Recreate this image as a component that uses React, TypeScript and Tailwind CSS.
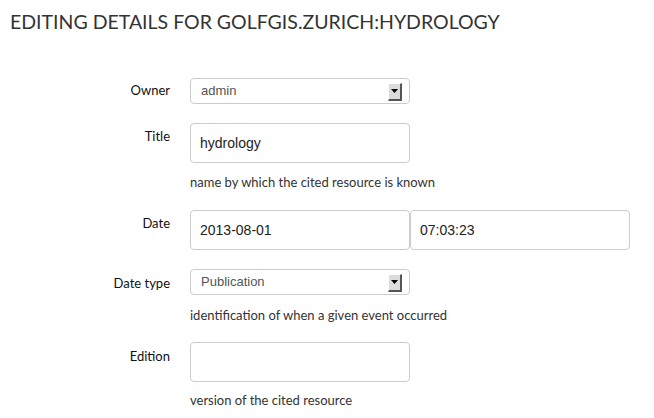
import React from "react";

const lato = { fontFamily: "Lato, 'Open Sans', sans-serif" };

function Arrow() {
  return (
    <div className="absolute right-[7px] top-[4px] w-[14px] h-[18px] bg-[#dcdcdc] border-r-2 border-b-2 border-r-[#555] border-b-[#555] border-t border-l border-t-white border-l-white flex items-center justify-center">
      <svg width="7" height="5" viewBox="0 0 7 5">
        <polygon points="0,0 7,0 3.5,4" fill="#000" />
      </svg>
    </div>
  );
}

function Select({ value }: { value: string }) {
  return (
    <div className="relative w-[220px] h-[26px] border border-[#ccc] rounded-[4px] bg-white flex items-center pl-[10px] text-[13px] text-[#555] font-['Liberation_Sans',Arial,sans-serif]">
      {value}
      <Arrow />
    </div>
  );
}

function Input({ value }: { value?: string }) {
  return (
    <div className="w-[220px] h-[40px] border border-[#ccc] rounded-[4px] bg-white flex items-center pl-[9px] text-[14px] text-[#222] font-['Liberation_Sans',Arial,sans-serif]">
      {value}
    </div>
  );
}

function Label({ children, pt }: { children: React.ReactNode; pt: string }) {
  return (
    <div className={`w-[170px] shrink-0 text-right text-[13px] text-[#111] ${pt}`} style={lato}>
      {children}
    </div>
  );
}

function Help({ children }: { children: React.ReactNode }) {
  return (
    <div className="text-[13px] text-[#333] leading-[16px]" style={lato}>
      {children}
    </div>
  );
}

export default function App() {
  return (
    <div className="w-[654px] h-[418px] bg-white overflow-hidden">
      <h1
        className="pl-[10px] pt-[10px] text-[19.5px] leading-[24px] text-[#333] uppercase"
        style={lato}
      >
        Editing details for golfgis.zurich:hydrology
      </h1>
      <div className="mt-[44px] flex flex-col">
        <div className="flex gap-[20px] items-center">
          <Label pt="">Owner</Label>
          <Select value="admin" />
        </div>
        <div className="flex gap-[20px] mt-[19px]">
          <Label pt="pt-[4px]">Title</Label>
          <div className="flex flex-col gap-[11px]">
            <Input value="hydrology" />
            <Help>name by which the cited resource is known</Help>
          </div>
        </div>
        <div className="flex gap-[20px] mt-[20px]">
          <Label pt="pt-[4px]">Date</Label>
          <div className="flex">
            <Input value="2013-08-01" />
            <Input value="07:03:23" />
          </div>
        </div>
        <div className="flex gap-[20px] mt-[19px]">
          <Label pt="pt-[5px]">Date type</Label>
          <div className="flex flex-col gap-[12px]">
            <Select value="Publication" />
            <Help>identification of when a given event occurred</Help>
          </div>
        </div>
        <div className="flex gap-[20px] mt-[19px]">
          <Label pt="pt-[5px]">Edition</Label>
          <div className="flex flex-col gap-[10px]">
            <Input />
            <Help>version of the cited resource</Help>
          </div>
        </div>
      </div>
    </div>
  );
}
